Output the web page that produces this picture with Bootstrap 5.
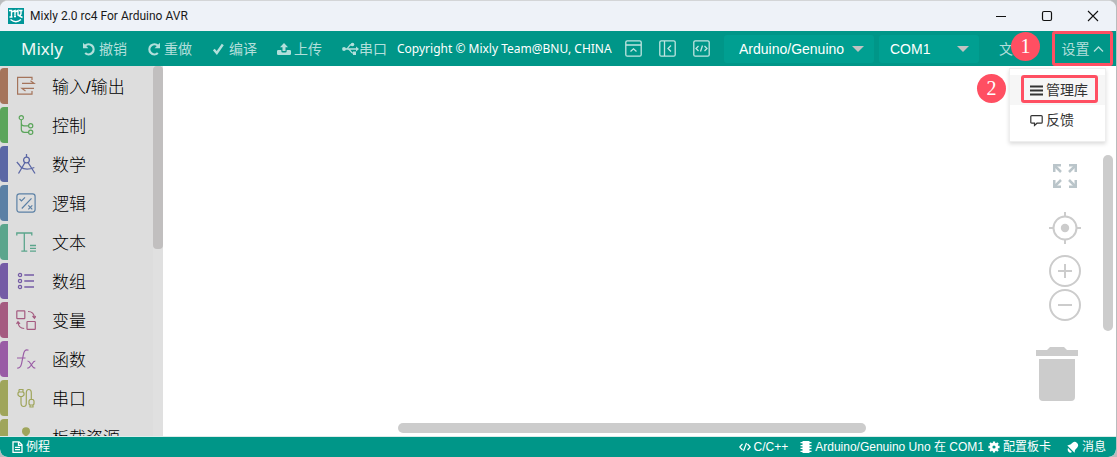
<!DOCTYPE html>
<html lang="zh-CN">
<head>
<meta charset="utf-8">
<meta name="viewport" content="width=device-width, initial-scale=1">
<title>Mixly 2.0 rc4 For Arduino AVR</title>
<link rel="stylesheet" href="https://cdn.jsdelivr.net/npm/bootstrap@5.3.0/dist/css/bootstrap.min.css">
<style>
:root { --teal: #009688; --mark-red: #ff4f62; }
body { background: #b9bcbe; font-family: "Liberation Sans", "Noto Sans CJK SC", sans-serif; font-size: 14px; line-height: 20px; }
svg { display: block; flex: none; fill: none; stroke: currentColor; }
svg.solid { fill: currentColor; stroke: none; }
.app-window { border-top: 1px solid #d3d5d7; border-radius: 8px; margin-right: 1px; background: #fff; }
.title-bar { height: 30px; background: #eef2f8; padding-left: 8px; font: 12px/20px Roboto, "Noto Sans", sans-serif; color: #1a1a1a; }
.title-bar .caption { padding-left: 6px; }
.title-bar button { width: 46px; height: 30px; color: #111; }
.title-bar button svg { margin: auto; }
.app-logo { background: #009698; color: #fff; }
.plain-btn { background: none; border: 0; padding: 0; color: inherit; }
.tool-bar { height: 35px; background: var(--teal); padding-left: 21px; color: #fff; }
.brand { font: 17px/24px "Noto Sans", sans-serif; width: 41px; color: #eef8f6; text-decoration: none; white-space: nowrap; }
.tools { gap: 20px; margin-left: 20px; }
.tool { display: flex; align-items: center; gap: 3px; width: 45px; white-space: nowrap; color: #b2dfdb; }
.tool.tight { gap: 0; }
.copyright { font: 12px/20px "Noto Sans", sans-serif; margin-left: 10px; width: 211px; white-space: nowrap; }
.panel-tools { gap: 17px; margin-left: 17px; color: #c0e5e1; }
.picks { gap: 5px; margin-left: 14px; }
.pick { height: 28px; border: 0; border-radius: 3px; padding: 0 24px 0 15px; color: #fff; font-size: 14px; line-height: 20px;
  background: #009f91 url("data:image/svg+xml,%3Csvg xmlns='http://www.w3.org/2000/svg' viewBox='0 0 12 6'%3E%3Cpath d='M0 0h12L6 6z' fill='%23c2c2c2'/%3E%3C/svg%3E") no-repeat right 10px center / 12px 6px; }
.pick.board { width: 150px; }
.pick.port { width: 100px; padding-left: 11px; }
.menus { color: #b2dfdb; gap: 25px; margin-right: 3px; }
.menu-file { width: 28px; white-space: nowrap; }
.menu-set { width: 61px; height: 35px; gap: 3px; white-space: nowrap; }
.menu-set.ringed, .entry-ring { border: 3px solid var(--mark-red); border-radius: 3px; }
.step { position: absolute; width: 29px; height: 29px; border-radius: 50%; background: var(--mark-red); color: #fff; font: 20px/28px "Liberation Serif", serif; text-align: center; }
.step.one { left: -41px; top: 1px; }
.step.two { left: -33px; top: 5px; }
.settings-menu { --bs-dropdown-min-width: 97px; --bs-dropdown-padding-y: 6px; --bs-dropdown-border-color: #eee; right: 10px; top: 37px; box-shadow: 0 2px 4px rgba(0,0,0,.14); font-size: 14px; z-index: 5; }
.settings-menu .dropdown-item { height: 30px; padding: 0 16px 0 20px; gap: 3px; color: #333; display: flex; align-items: center; line-height: 20px; }
.settings-menu .dropdown-item.current { background: #f6f6f6; }
.entry-ring { position: absolute; left: 11px; top: 6px; width: 77px; height: 28px; pointer-events: none; }
.toolbox { width: 163px; background: #ddd; color: #000; }
.cats { padding-top: 2px; }
.cat { height: 36px; margin-bottom: 3px; border-left: 8px solid; border-radius: 4px 0 0 4px; padding-left: 8px; }
.cat a { font-size: 17px; font-weight: 300; line-height: 24px; color: #000; padding: 3px 0 0 16px; text-decoration: none; white-space: nowrap; }
.toolbox-track { width: 10px; background: #e0e0e0; }
.toolbox-track span { display: block; height: 183px; border-radius: 4px; background: #c1bfbf; }
.canvas-tools { position: absolute; right: 22px; top: 98px; color: #ccc; }
.canvas-tools button, .bin { display: block; }
.zoom-in { margin-top: 11px; }
.bin { margin: 26px 16px 0 0; }
.scroll-y { position: absolute; right: 3px; top: 89px; width: 10px; height: 176px; border-radius: 5px; background: #ccc; }
.scroll-x { position: absolute; left: 24.7%; right: 26.2%; bottom: 3px; height: 10px; border-radius: 5px; background: #ccc; }
.status-bar { height: 22px; border-top: 1px solid #dcebe9; background: var(--teal); color: #fff; padding: 0 10px 0 12px; font-size: 12px; line-height: 20px; border-radius: 0 0 7px 7px; }
.status-bar button { display: flex; align-items: center; gap: 3px; white-space: nowrap; }
</style>
</head>
<body>
<div class="app-window vh-100 d-flex flex-column overflow-hidden">
  <header class="title-bar d-flex align-items-center">
    <svg class="app-logo" width="16" height="16" viewBox="0 0 16 16" stroke-width="1.4"><path d="M1 2.500h2.500V8.500M1.500 9h3M3.500 4L7 2.500v5M6 8.500h2M7 4l3-1.500v4.500l2 1M11 2.500h3.500M13 3v3l-1.500 2L14.500 9.500M2.500 11.500q5.500 4.500 10.500 0"/></svg>
    <span class="caption me-auto text-nowrap">Mixly 2.0 rc4 For Arduino AVR</span>
    <button class="plain-btn" aria-label="最小化"><svg width="12" height="12" viewBox="0 0 12 12"><path d="M1 6.5h10"/></svg></button>
    <button class="plain-btn" aria-label="最大化"><svg width="12" height="12" viewBox="0 0 12 12"><rect x="1.5" y="1.5" width="9" height="9" rx="1.5" stroke-width="1.2"/></svg></button>
    <button class="plain-btn" aria-label="关闭"><svg width="12" height="12" viewBox="0 0 12 12"><path d="M1 1l10 10M11 1L1 11" stroke-width="1.1"/></svg></button>
  </header>

  <nav class="tool-bar d-flex align-items-center position-relative">
    <a class="brand" href="#">Mixly</a>
    <div class="tools d-flex">
      <button class="plain-btn tool"><svg width="14" height="14" viewBox="0 0 14 14" stroke-width="2.3"><path d="M3 3.8A5 5 0 1 1 3.2 11"/><path d="M1 .8v5.4h5.4z" fill="currentColor" stroke="none"/></svg>撤销</button>
      <button class="plain-btn tool"><svg width="14" height="14" viewBox="0 0 14 14" stroke-width="2.3"><path d="M11 3.8A5 5 0 1 0 10.8 11"/><path d="M13 .8v5.4H7.6z" fill="currentColor" stroke="none"/></svg>重做</button>
      <button class="plain-btn tool"><svg width="14" height="14" viewBox="0 0 14 14" stroke-width="2.4"><path d="M1.8 7.5l3 3.5 6-8.5"/></svg>编译</button>
      <button class="plain-btn tool"><svg class="solid" width="14" height="14" viewBox="0 0 14 14"><path d="M7 1l4 4.3H8.5V9h-3V5.300H3z"/><path d="M1.200 8H4.300v1q0 1.500 1.500 1.500h2.400q1.500 0 1.500-1.500V8h3.100q1.200 0 1.200 1.200v2.600q0 1.200-1.200 1.200H1.200Q0 13 0 11.800V9.200Q0 8 1.200 8z"/></svg>上传</button>
      <button class="plain-btn tool tight"><svg width="17" height="14" viewBox="0 0 17 14" stroke-width="1.3"><path d="M2 7h13M4 7c3 0 2-4.500 6-4.500M6 7c3 0 2 4.500 6 4.500"/><circle cx="2" cy="7" r="1.900" fill="currentColor" stroke="none"/><circle cx="10.500" cy="2.500" r="1.800" fill="currentColor" stroke="none"/><path d="M11 9.500h3v3.500h-3zM14 4.500L17 7l-3 2.500z" fill="currentColor" stroke="none"/></svg>串口</button>
    </div>
    <span class="copyright">Copyright © Mixly Team@BNU, CHINA</span>
    <div class="panel-tools d-flex">
      <button class="plain-btn" aria-label="收起顶栏"><svg width="17" height="17" viewBox="0 0 17 17" stroke-width="1.3"><rect x=".8" y=".8" width="15.400" height="15.400" rx="1.500"/><path d="M1 5h15M5.500 11.500l3-2.700 3 2.700"/></svg></button>
      <button class="plain-btn" aria-label="收起侧栏"><svg width="17" height="17" viewBox="0 0 17 17" stroke-width="1.3"><rect x=".8" y=".8" width="15.400" height="15.400" rx="1.500"/><path d="M5.500 1v15M12 5.500l-3 3 3 3"/></svg></button>
      <button class="plain-btn" aria-label="代码"><svg width="17" height="17" viewBox="0 0 17 17" stroke-width="1.3"><rect x=".8" y=".8" width="15.400" height="15.400" rx="1.500"/><path d="M5.500 6L3 8.500 5.500 11M11.500 6L14 8.500 11.500 11M9.500 5.500l-2 6"/></svg></button>
    </div>
    <div class="picks d-flex">
      <select class="form-select pick board" aria-label="板卡"><option>Arduino/Genuino</option></select>
      <select class="form-select pick port" aria-label="端口"><option>COM1</option></select>
    </div>
    <div class="menus d-flex align-items-center ms-auto">
      <button class="plain-btn menu-file">文件</button>
      <div class="position-relative">
        <button class="plain-btn menu-set ringed d-flex align-items-center justify-content-center" aria-expanded="true">设置<svg width="11" height="10" viewBox="0 0 11 10" stroke-width="1.300"><path d="M1 7.500L5.500 3 10 7.500"/></svg></button>
        <span class="step one">1</span>
      </div>
    </div>
    <div class="dropdown-menu settings-menu show rounded-0">
      <a class="dropdown-item current" href="#"><svg width="13" height="13" viewBox="0 0 13 13" stroke-width="2"><path d="M0 2.500h13M0 6.500h13M0 10.500h13"/></svg>管理库</a>
      <a class="dropdown-item" href="#"><svg width="13" height="13" viewBox="0 0 13 13" stroke-width="1.200"><path d="M1.800 1.600h9.400q1 0 1 1v5.600q0 1-1 1H7l-2.500 2.300V9.200H1.800q-1 0-1-1V2.600q0-1 1-1z"/></svg>反馈</a>
      <span class="entry-ring"></span>
      <span class="step two">2</span>
    </div>
  </nav>

  <main class="d-flex flex-grow-1 overflow-hidden">
    <aside class="toolbox d-flex flex-shrink-0 overflow-hidden">
      <ul class="cats list-unstyled mb-0 flex-grow-1">
        <li class="cat d-flex align-items-center" style="color:#a5745b"><svg width="20" height="20" viewBox="0 0 20 20" stroke-width="1.2"><path d="M16 4V1.300H1.600v16.900H16V15M6 7.300h12l-3.500-2.500M18 12.400H6l3.500 2.500"/></svg><a href="#">输入/输出</a></li>
        <li class="cat d-flex align-items-center" style="color:#5ba55b"><svg width="20" height="20" viewBox="0 0 20 20" stroke-width="1.2"><circle cx="5.300" cy="2.700" r="2.100"/><circle cx="14.700" cy="10.800" r="2.100"/><circle cx="14.700" cy="17.300" r="2.100"/><path d="M5.300 4.800v9.500q0 3 3 3h4.300M5.300 8q0 2.800 2.800 2.800h4.500"/></svg><a href="#">控制</a></li>
        <li class="cat d-flex align-items-center" style="color:#5b67a5"><svg width="20" height="20" viewBox="0 0 20 20" stroke-width="1.300"><circle cx="10.500" cy="6" r="2.900"/><path d="M10.500 0v3M9 8.500L2.500 19.500M12 8.500l7 11M.8 8q2 2 4 5 5 4 13.500.5"/></svg><a href="#">数学</a></li>
        <li class="cat d-flex align-items-center" style="color:#5b80a5"><svg width="20" height="20" viewBox="0 0 20 20" stroke-width="1.200"><rect x=".9" y=".9" width="18.200" height="18.200" rx="2.500"/><path d="M5.800 15.500l9.700-10.200M3.500 6l2 2L9 4.300M12.300 12.300l4 4M16.300 12.300l-4 4"/></svg><a href="#">逻辑</a></li>
        <li class="cat d-flex align-items-center" style="color:#5ba58c"><svg width="20" height="20" viewBox="0 0 20 20" stroke-width="1.300"><path d="M.8 3.500V1h15v2.500M8.300 1v18M5.300 19.200h6M14 13.500h6M14 16.300h6M14 19.200h6"/></svg><a href="#">文本</a></li>
        <li class="cat d-flex align-items-center" style="color:#745ba5"><svg width="20" height="20" viewBox="0 0 20 20" stroke-width="1.300"><circle cx="4" cy="4" r="1.600"/><circle cx="4" cy="10" r="1.600"/><circle cx="4" cy="16" r="1.600"/><path d="M8.300 4H18M8.300 10H18M8.300 16H18"/></svg><a href="#">数组</a></li>
        <li class="cat d-flex align-items-center" style="color:#a55b80"><svg width="20" height="20" viewBox="0 0 20 20" stroke-width="1.200"><rect x=".8" y=".8" width="8" height="7.800" rx=".6"/><rect x="11" y="11.500" width="8.300" height="7.800" rx=".6"/><path d="M12 1.500q6 0 6.500 6.500M16.500 6l2 2.200L20 6M8.200 18.500q-5.700 0-6.200-6.500M.5 13.800L2 11.700l2 2.100"/></svg><a href="#">变量</a></li>
        <li class="cat d-flex align-items-center" style="color:#995ba5"><svg width="20" height="20" viewBox="0 0 20 20" stroke-width="1.200"><path d="M12.500 1.200C9.500 0 8 2 7.300 6L5.600 14.500Q4.500 19.500 1.200 19M1 9h8.500M11.500 12q1.700 0 3 2.500l2 3q1 1.600 2.800 1.600M19.300 12q-1.500 0-3.500 3.200-2.500 4-4.500 4"/></svg><a href="#">函数</a></li>
        <li class="cat d-flex align-items-center" style="color:#9fa55b"><svg width="20" height="20" viewBox="0 0 20 20" stroke-width="1.200"><path d="M3 4h4M3 1.500V4L2 5v2l1.500 1.500h3L8 7V5L7 4V1.500H3M5 8.500V15q0 3.500 2.700 3.500T10.300 15V5q0-3.500 2.500-3.500T15.300 5v6M14 11.500h3l1 1.500v3l-1 1v2h-3v-2l-1-1v-3zM14 17h3"/></svg><a href="#">串口</a></li>
        <li class="cat d-flex align-items-center" style="color:#9fa55b"><svg class="solid" width="20" height="20" viewBox="0 0 20 20"><circle cx="10" cy="4.300" r="4"/><path d="M8.500 7h3v3l6 2v6h-15v-6l6-2z"/></svg><a href="#">板载资源</a></li>
      </ul>
      <div class="toolbox-track"><span></span></div>
    </aside>
    <section class="flex-grow-1 position-relative bg-white">
      <div class="canvas-tools d-flex flex-column align-items-center">
        <button class="plain-btn mb-4" aria-label="全屏"><svg width="24" height="24" viewBox="0 0 24 24" color="#bac5ca" stroke-width="2.500"><path d="M2 2l6 6M22 2l-6 6M2 22l6-6M22 22l-6-6"/><path d="M0 8V0h8v2.500H2.500V8zM16 0h8v8h-2.500V2.500H16zM0 16h2.500v5.500H8V24H0zM21.500 16H24v8h-8v-2.500h5.500z" fill="currentColor" stroke="none"/></svg></button>
        <button class="plain-btn" aria-label="居中"><svg width="32" height="32" viewBox="0 0 32 32" stroke-width="2"><circle cx="16" cy="16" r="11.500"/><circle cx="16" cy="16" r="4.200" fill="currentColor" stroke="none"/><path d="M16 0v4M16 28v4M0 16h4M28 16h4"/></svg></button>
        <button class="plain-btn zoom-in" aria-label="放大"><svg width="32" height="32" viewBox="0 0 32 32" stroke-width="2"><circle cx="16" cy="16" r="15"/><path d="M9 16h14M16 9v14"/></svg></button>
        <button class="plain-btn" aria-label="缩小"><svg width="32" height="34" viewBox="0 -1 32 34" stroke-width="2"><circle cx="16" cy="17" r="15"/><path d="M9 17h14"/></svg></button>
        <svg class="solid bin" width="42" height="54" viewBox="0 0 42 54"><path d="M0 3h11l3-3h14l3 3h11v6H0zM3 12h36v38q0 4-4 4H7q-4 0-4-4z"/></svg>
      </div>
      <div class="scroll-y"></div>
      <div class="scroll-x"></div>
    </section>
  </main>

  <footer class="status-bar d-flex align-items-center">
    <button class="plain-btn me-auto"><svg width="11" height="12" viewBox="0 0 11 12" stroke-width="1.300"><path d="M1 .8h6l3 3v7.500H1zM6.500 1v3.300H10M3 6.300h5M3 8.700h5"/></svg>例程</button>
    <button class="plain-btn me-2 pe-1"><svg width="12" height="12" viewBox="0 0 12 12" stroke-width="1.200"><path d="M3.500 3L.8 6l2.700 3M8.500 3l2.700 3-2.700 3M7.500 2l-3 8"/></svg>C/C++</button>
    <button class="plain-btn me-1"><svg class="solid" width="12" height="12" viewBox="0 0 12 12"><path d="M2.500 0h7v12h-7zM.5 1h11v1.300H.5zM.5 3.900h11v1.300H.5zM.5 6.800h11v1.300H.5zM.5 9.700h11V11H.5z"/></svg>Arduino/Genuino Uno 在 COM1</button>
    <button class="plain-btn me-3"><svg width="12" height="12" viewBox="0 0 12 12"><circle cx="6" cy="6" r="2.900" stroke-width="2.600"/><path d="M6 .4v2M6 9.600v2M.4 6h2M9.600 6h2M2 2l1.500 1.500M8.500 8.500L10 10M10 2L8.500 3.500M3.500 8.500L2 10" stroke-width="2.300"/></svg>配置板卡</button>
    <button class="plain-btn"><svg class="solid" width="12" height="12" viewBox="0 0 12 12"><path d="M.3 4.500Q4 4 5.500 1.700 8-.2 10 2q2.200 2 .3 4.500Q8 8 7.500 11.700zM1 7l4 4Q3 12.500 1.500 10.700.2 9 1 7z"/></svg>消息</button>
  </footer>
</div>
<script src="https://cdn.jsdelivr.net/npm/bootstrap@5.3.0/dist/js/bootstrap.bundle.min.js"></script>
</body>
</html>
